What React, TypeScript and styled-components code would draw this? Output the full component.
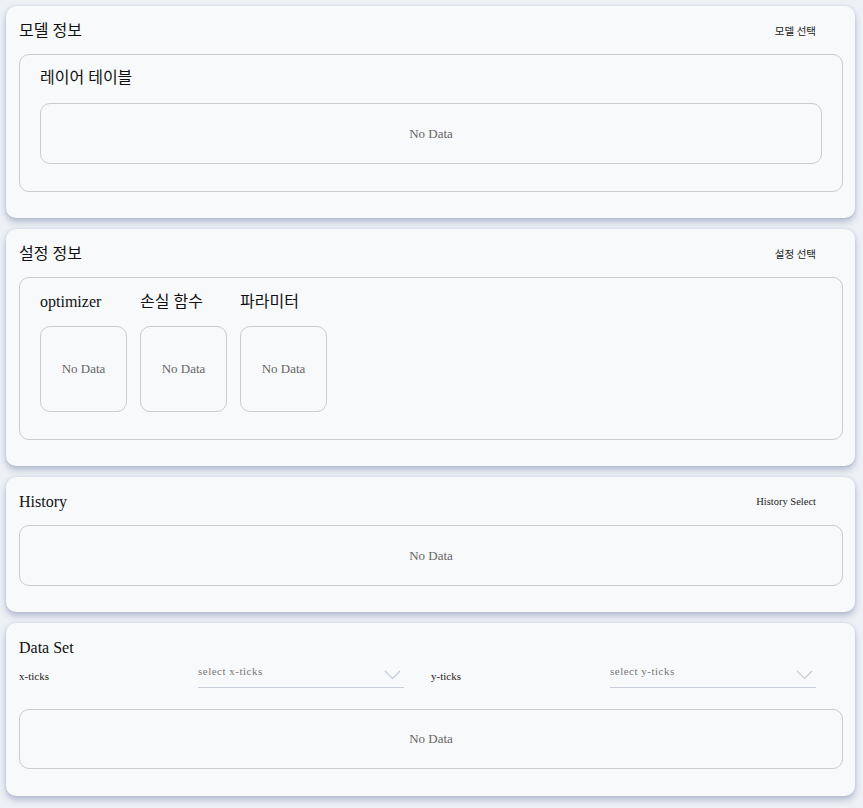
import React from "react";
import styled, { createGlobalStyle } from "styled-components";

const Global = createGlobalStyle`
  html, body { margin: 0; padding: 0; background: #edf0f5; }
  body { font-family: "Liberation Serif", "Noto Sans CJK KR", serif; color: #111; }
`;

const Page = styled.div`
  display: flex;
  flex-direction: column;
  gap: 11px;
  padding: 6px 8px 12px 6px;
`;

const Card = styled.section<{ $pb?: number }>`
  background: #f8f9fb;
  border-radius: 10px;
  box-shadow: 0 4px 6px rgba(90, 108, 150, 0.38), 0 0 3px rgba(120, 135, 170, 0.22);
  padding: 13px 12px ${(p) => p.$pb ?? 26}px 13px;
`;

const Header = styled.div<{ $gap?: number }>`
  display: flex;
  align-items: center;
  justify-content: space-between;
  height: 22px;
  margin-bottom: ${(p) => (p.$gap ?? 13)}px;
  padding-right: 27px;
`;

const Title = styled.h2`
  margin: 0;
  padding-top: 1px;
  font-size: 16px;
  font-weight: 400;
  line-height: 22px;
  color: #111;
`;

const HeaderAction = styled.button`
  border: none;
  background: none;
  padding: 0;
  font-family: inherit;
  font-size: 10.5px;
  color: #222;
  cursor: pointer;
`;

const Panel = styled.div`
  border: 1px solid #c9cbd1;
  border-radius: 10px;
  padding: 12px 20px 27px;
`;

const PanelTitle = styled.h3`
  margin: 0 0 14px;
  font-size: 16px;
  font-weight: 400;
  line-height: 22px;
  color: #111;
`;

const Empty = styled.div<{ $h: number; $w?: number }>`
  display: flex;
  align-items: center;
  justify-content: center;
  height: ${(p) => p.$h}px;
  ${(p) => (p.$w ? `width: ${p.$w}px;` : "")}
  box-sizing: border-box;
  border: 1px solid #c9cbd1;
  border-radius: 10px;
  font-size: 13px;
  color: #666;
`;

const Columns = styled.div`
  display: flex;
  gap: 14px;
`;

const Column = styled.div`
  display: flex;
  flex-direction: column;
  width: 86px;
`;

const ColumnTitle = styled(PanelTitle)`
  padding-top: 1px;
  margin-bottom: 13px;
`;

const SelectRow = styled.div`
  display: grid;
  grid-template-columns: 1fr 1fr;
  height: 28px;
  margin-bottom: 21px;
`;

const Field = styled.div`
  display: flex;
  align-items: center;
  padding-right: 27px;
`;

const FieldLabel = styled.span`
  flex: 1;
  font-size: 11px;
  color: #222;
  padding-top: 3px;
`;

const SelectBox = styled.div`
  width: 206px;
  height: 28px;
  box-sizing: border-box;
  border-bottom: 1px solid #c8cdda;
  display: flex;
  align-items: flex-start;
  justify-content: space-between;
  padding: 5px 3px 0 0;
`;

const Placeholder = styled.span`
  font-size: 11px;
  letter-spacing: 0.5px;
  color: #777;
`;

const ChevronSvg = styled.svg`
  margin-top: 5px;
`;

const Chevron = () => (
  <ChevronSvg width="17" height="10" viewBox="0 0 17 10">
    <polyline points="1,1 8.5,8.5 16,1" fill="none" stroke="#c4cad9" strokeWidth="1.2" />
  </ChevronSvg>
);

const Select = ({ placeholder }: { placeholder: string }) => (
  <SelectBox>
    <Placeholder>{placeholder}</Placeholder>
    <Chevron />
  </SelectBox>
);

export default function App() {
  return (
    <>
      <Global />
      <Page>
        <Card>
          <Header>
            <Title>모델 정보</Title>
            <HeaderAction>모델 선택</HeaderAction>
          </Header>
          <Panel>
            <PanelTitle>레이어 테이블</PanelTitle>
            <Empty $h={61}>No Data</Empty>
          </Panel>
        </Card>

        <Card>
          <Header>
            <Title>설정 정보</Title>
            <HeaderAction>설정 선택</HeaderAction>
          </Header>
          <Panel>
            <Columns>
              {["optimizer", "손실 함수", "파라미터"].map((t) => (
                <Column key={t}>
                  <ColumnTitle>{t}</ColumnTitle>
                  <Empty $h={86} $w={87}>No Data</Empty>
                </Column>
              ))}
            </Columns>
          </Panel>
        </Card>

        <Card>
          <Header>
            <Title>History</Title>
            <HeaderAction>History Select</HeaderAction>
          </Header>
          <Empty $h={61}>No Data</Empty>
        </Card>

        <Card $pb={27}>
          <Header $gap={2}>
            <Title>Data Set</Title>
          </Header>
          <SelectRow>
            <Field>
              <FieldLabel>x-ticks</FieldLabel>
              <Select placeholder="select x-ticks" />
            </Field>
            <Field>
              <FieldLabel>y-ticks</FieldLabel>
              <Select placeholder="select y-ticks" />
            </Field>
          </SelectRow>
          <Empty $h={60}>No Data</Empty>
        </Card>
      </Page>
    </>
  );
}
